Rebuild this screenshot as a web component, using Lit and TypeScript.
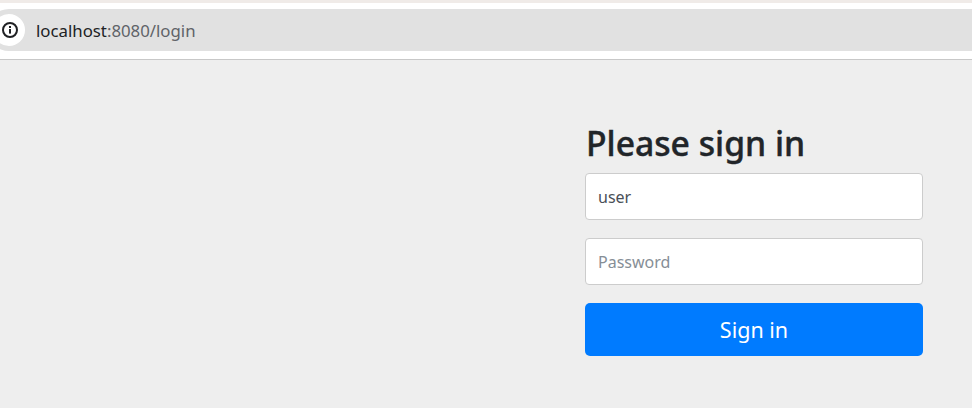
import { LitElement, html, css } from "lit";
import { customElement } from "lit/decorators.js";

@customElement("app-root")
export class AppRoot extends LitElement {
  static styles = css`
    :host {
      display: flex;
      flex-direction: column;
      width: 972px;
      height: 408px;
      overflow: hidden;
      background: #eeeeee;
      font-family: "Noto Sans", "Open Sans", sans-serif;
    }
    .topline { height: 3px; background: #f0ebe8; }
    .chrome {
      height: 57px;
      box-sizing: border-box;
      background: #ffffff;
      border-bottom: 1px solid #c8c8c8;
      padding-top: 6px;
    }
    .omnibox {
      height: 42px;
      margin-left: -12px;
      padding-left: 5px;
      background: #e1e1e1;
      border-radius: 21px 0 0 21px;
      display: flex;
      align-items: center;
    }
    .info {
      width: 32px;
      height: 32px;
      margin-right: 11px;
      padding-left: 2px;
      box-sizing: border-box;
      background: #fff;
      border-radius: 50%;
      display: flex;
      align-items: center;
      justify-content: center;
      flex: none;
    }
    .url { font-size: 16.8px; color: #5f6368; }
    .url b { font-weight: 400; color: #202124; }
    .page {
      flex: 1;
      display: flex;
      justify-content: flex-end;
      padding: 61px 49px 0 0;
    }
    .form { width: 338px; display: flex; flex-direction: column; }
    h2 {
      margin: 0 0 8px 1px;
      font-size: 33.7px;
      font-weight: 500;
      line-height: 44px;
      color: #212529;
      -webkit-text-stroke: 0.4px #212529;
    }
    .field {
      box-sizing: border-box;
      height: 47px;
      background: #fff;
      border: 1px solid #cccccc;
      border-radius: 4px;
      padding: 0 12px;
      display: flex;
      align-items: center;
      font-size: 16px;
      color: #495057;
      margin-bottom: 18px;
    }
    .field.ph { color: #868e96; }
    .btn {
      height: 53px;
      background: #007bff;
      color: #fff;
      border-radius: 5px;
      display: flex;
      align-items: center;
      justify-content: center;
      font-size: 21.5px;
    }
  `;

  render() {
    return html`
      <div class="topline"></div>
      <div class="chrome">
        <div class="omnibox">
          <div class="info">
            <svg width="16" height="16" viewBox="0 0 16 16" fill="none">
              <circle cx="8" cy="8" r="7" stroke="#202124" stroke-width="2" />
              <rect x="7" y="7" width="2" height="4.6" fill="#202124" />
              <rect x="7" y="4" width="2" height="2" fill="#202124" />
            </svg>
          </div>
          <div class="url"><b>localhost</b>:8080/login</div>
        </div>
      </div>
      <div class="page">
        <div class="form">
          <h2>Please sign in</h2>
          <div class="field">user</div>
          <div class="field ph">Password</div>
          <div class="btn">Sign in</div>
        </div>
      </div>
    `;
  }
}
